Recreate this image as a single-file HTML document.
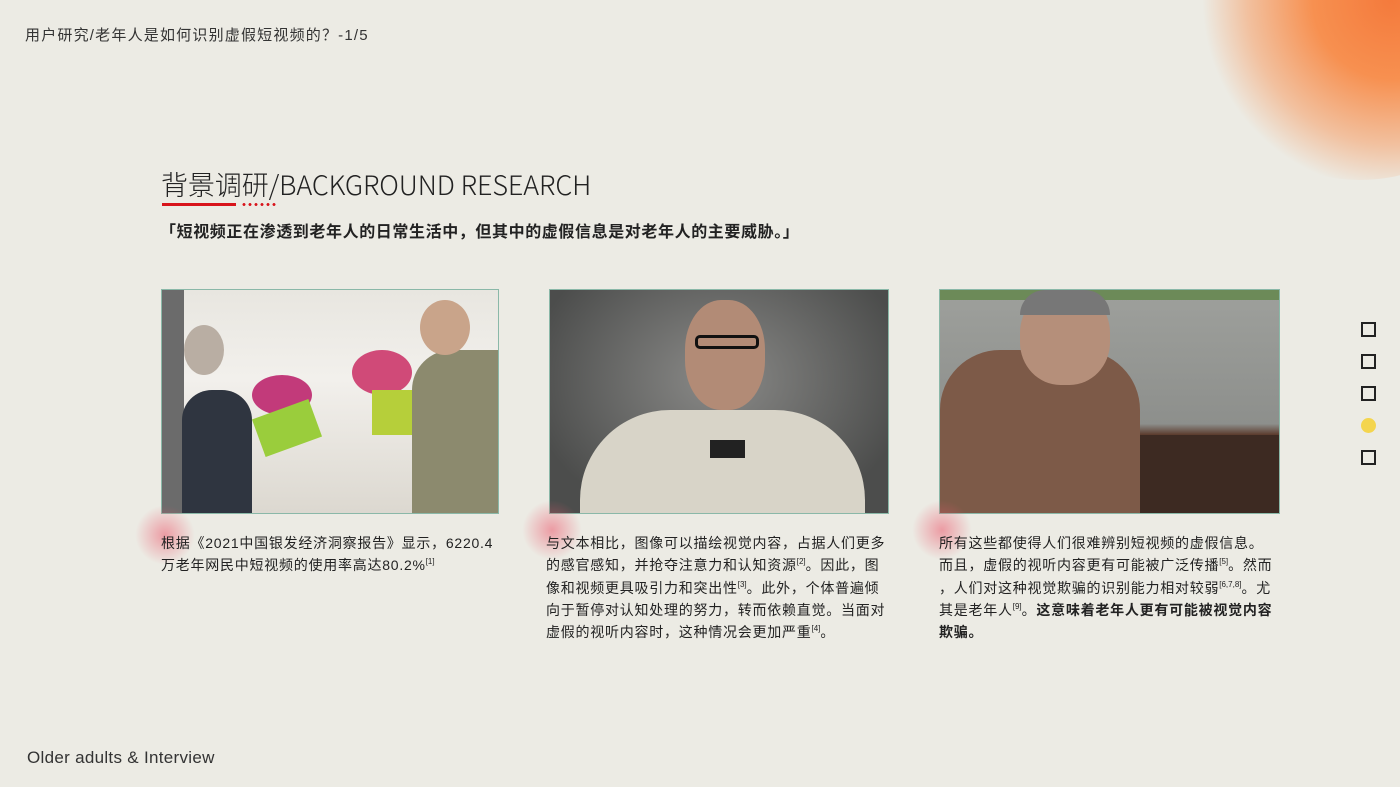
<!DOCTYPE html>
<html><head><meta charset="utf-8"><style>
*{margin:0;padding:0;box-sizing:border-box}
body{width:1400px;height:787px;overflow:hidden;background:#ecebe4;position:relative;font-family:"Liberation Sans","Noto Sans CJK SC",sans-serif;color:#1a1a1a}
.abs{position:absolute}
.glow{position:absolute;left:1200px;top:-120px;width:320px;height:300px;border-radius:50%;background:radial-gradient(circle at 60% 40%,#f47a3c 0%,#f79050 30%,rgba(247,150,90,0.5) 55%,rgba(236,235,228,0) 72%)}
.top{left:25px;top:24px;font-size:15px;color:#333;letter-spacing:1.2px}
.h1{left:161px;top:164px;font-size:27px;font-weight:300;color:#222;font-family:"Noto Sans CJK SC","Liberation Sans",sans-serif;letter-spacing:-0.1px}
.red{left:162px;top:203px;width:74px;height:3px;background:#d8141b}
.dots{left:241px;top:203px;width:36px;height:3px;background:radial-gradient(circle,#d8141b 1.3px,transparent 1.6px) 0 0/6px 3px}
.quote{left:160px;top:218px;font-size:16px;font-weight:bold;color:#222;letter-spacing:0.6px}
.ph{position:absolute;top:289px;height:225px;border:1px solid #8ab8a8;overflow:hidden}
.p{position:absolute;font-size:14px;letter-spacing:0.75px;line-height:22.3px;color:#222;width:348px}
.p sup{font-size:8px;vertical-align:6px;line-height:0;letter-spacing:0}
.blush{position:absolute;width:60px;height:60px;border-radius:50%;background:radial-gradient(circle,rgba(235,90,110,0.55),rgba(235,90,110,0) 70%)}
.sq{position:absolute;left:1361px;width:15px;height:15px;border:2px solid #222}
.bottom{left:27px;top:748px;font-size:17px;color:#333;letter-spacing:0.3px}
</style></head><body>
<div class="glow"></div>
<div class="abs top">用户研究/老年人是如何识别虚假短视频的？-1/5</div>
<div class="abs h1">背景调研/BACKGROUND RESEARCH</div>
<div class="abs red"></div><div class="abs dots"></div>
<div class="abs quote">「短视频正在渗透到老年人的日常生活中，但其中的虚假信息是对老年人的主要威胁。」</div>

<div class="ph" style="left:161px;width:338px;background:linear-gradient(180deg,#e8e6e0 0%,#f2f0ec 40%,#dcd8d0 100%)">
 <div class="abs" style="left:0;top:0;width:22px;height:225px;background:#6b6b6b"></div>
 <div class="abs" style="left:20px;top:100px;width:70px;height:125px;background:#2f3540;border-radius:30px 30px 0 0"></div>
 <div class="abs" style="left:22px;top:35px;width:40px;height:50px;background:#b9aea3;border-radius:50%"></div>
 <div class="abs" style="left:90px;top:85px;width:60px;height:40px;background:#c23a7a;border-radius:50%"></div>
 <div class="abs" style="left:190px;top:60px;width:60px;height:45px;background:#d04a78;border-radius:50%"></div>
 <div class="abs" style="left:210px;top:100px;width:46px;height:45px;background:#b6cf3a"></div>
 <div class="abs" style="left:95px;top:118px;width:60px;height:40px;background:#9acd3c;transform:rotate(-20deg)"></div>
 <div class="abs" style="left:250px;top:60px;width:88px;height:165px;background:#8c8a6e;border-radius:40px 0 0 0"></div>
 <div class="abs" style="left:258px;top:10px;width:50px;height:55px;background:#c9a48a;border-radius:50%"></div>
</div>
<div class="ph" style="left:549px;width:340px;background:radial-gradient(ellipse at 50% 40%,#8a8a88,#4c4d4c 80%)">
 <div class="abs" style="left:30px;top:120px;width:285px;height:110px;background:#d8d4c8;border-radius:90px 90px 0 0"></div>
 <div class="abs" style="left:135px;top:10px;width:80px;height:110px;background:#b28b76;border-radius:45%"></div>
 <div class="abs" style="left:145px;top:45px;width:64px;height:14px;border:3px solid #111;border-radius:5px"></div>
 <div class="abs" style="left:160px;top:150px;width:35px;height:18px;background:#222"></div>
</div>
<div class="ph" style="left:939px;width:341px;background:linear-gradient(180deg,#9ea09c 0%,#8d8f8c 60%,#5b3a2c 65%,#4d2e22 100%)">
 <div class="abs" style="left:0;top:0;width:341px;height:10px;background:#6c8a58"></div>
 <div class="abs" style="left:0;top:60px;width:200px;height:165px;background:#7d5a48;border-radius:60px 60px 0 0"></div>
 <div class="abs" style="left:80px;top:0;width:90px;height:95px;background:#b58f7a;border-radius:45%"></div>
 <div class="abs" style="left:80px;top:0;width:90px;height:25px;background:#777;border-radius:40px 40px 0 0"></div>
 <div class="abs" style="left:200px;top:145px;width:141px;height:80px;background:#3d2a22"></div>
</div>

<div class="blush" style="left:135px;top:505px"></div>
<div class="blush" style="left:522px;top:500px"></div>
<div class="blush" style="left:912px;top:500px"></div>

<div class="p" style="left:161px;top:532px;width:345px">根据《2021中国银发经济洞察报告》显示，6220.4万老年网民中短视频的使用率高达80.2%<sup>[1]</sup></div>
<div class="p" style="left:546px;top:532px">与文本相比，图像可以描绘视觉内容，占据人们更多的感官感知，并抢夺注意力和认知资源<sup>[2]</sup>。因此，图像和视频更具吸引力和突出性<sup>[3]</sup>。此外，个体普遍倾向于暂停对认知处理的努力，转而依赖直觉。当面对虚假的视听内容时，这种情况会更加严重<sup>[4]</sup>。</div>
<div class="p" style="left:939px;top:532px;width:360px">所有这些都使得人们很难辨别短视频的虚假信息。<br>而且，虚假的视听内容更有可能被广泛传播<sup>[5]</sup>。然而<br>，人们对这种视觉欺骗的识别能力相对较弱<sup>[6,7,8]</sup>。尤<br>其是老年人<sup>[9]</sup>。<b>这意味着老年人更有可能被视觉内容<br>欺骗。</b></div>

<div class="sq" style="top:322px"></div>
<div class="sq" style="top:354px"></div>
<div class="sq" style="top:386px"></div>
<div class="abs" style="left:1361px;top:418px;width:15px;height:15px;border-radius:50%;background:#f4d54e"></div>
<div class="sq" style="top:450px"></div>

<div class="abs bottom">Older adults &amp; Interview</div>
</body></html>
